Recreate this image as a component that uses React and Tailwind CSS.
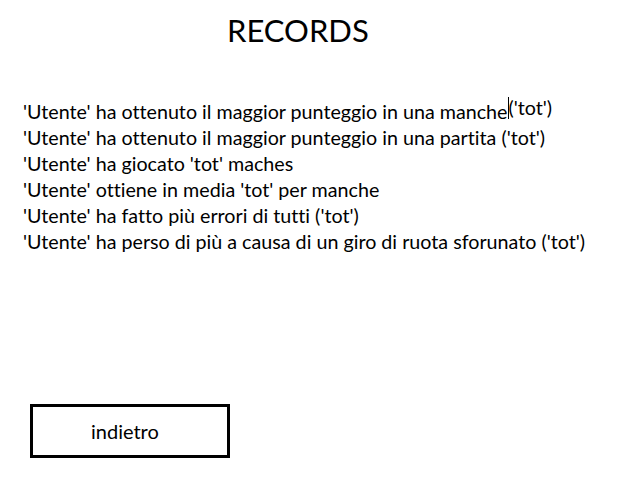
export default function App() {
  const f = { fontFamily: 'Lato, "Open Sans", sans-serif' };
  return (
    <div className="w-[640px] h-[480px] bg-white text-black relative [font-variant-ligatures:none]" style={f}>
      <div className="pt-[11px] pl-[227px] text-[31px] leading-[38px]">RECORDS</div>
      <div className="mt-[46px] pl-[23px] text-[19.7px] leading-[26px]">
        <div className="flex items-end h-[30px]">
          <span>'Utente' ha ottenuto il maggior punteggio in una manche</span>
          <span className="border-l border-black mb-[6px] leading-[22px]">('tot')</span>
        </div>
        <div>'Utente' ha ottenuto il maggior punteggio in una partita ('tot')</div>
        <div>'Utente' ha giocato 'tot' maches</div>
        <div>'Utente' ottiene in media 'tot' per manche</div>
        <div>'Utente' ha fatto più errori di tutti ('tot')</div>
        <div>'Utente' ha perso di più a causa di un giro di ruota sforunato ('tot')</div>
      </div>
      <div className="mt-[149px] ml-[30px] w-[200px] h-[54px] border-[3px] border-black flex items-center pl-[58px] text-[20px]">
        indietro
      </div>
    </div>
  );
}
